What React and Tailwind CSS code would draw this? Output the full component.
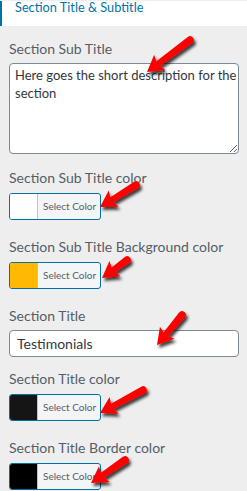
import React from "react";

const ARROWS = [
  { tail: [190, 40], tip: [147, 72] },
  { tail: [136, 185], tip: [100, 207] },
  { tail: [127, 260], tip: [102, 278] },
  { tail: [182, 315], tip: [157, 345] },
  { tail: [143, 390], tip: [100, 413] },
  { tail: [125, 460], tip: [91, 483] },
];

function arrowPath(L) {
  const H = 14, hw = 9.5, r = 3.8, sw = 3.0;
  const b = L - H;
  return `M0,${-r} L${b},${-sw} L${b - 2},${-hw} L${L},0 L${b - 2},${hw} L${b},${sw} L0,${r} A${r},${r} 0 0 1 0,${-r} Z`;
}

function Arrows() {
  return (
    <svg
      className="absolute left-0 top-0 pointer-events-none"
      width="247"
      height="491"
      viewBox="0 0 247 491"
    >
      <defs>
        <filter id="ash" x="-50%" y="-50%" width="200%" height="200%">
          <feDropShadow dx="2" dy="3" stdDeviation="1.4" floodColor="#000" floodOpacity="0.75" />
        </filter>
      </defs>
      {ARROWS.map((a, i) => {
        const dx = a.tip[0] - a.tail[0];
        const dy = a.tip[1] - a.tail[1];
        const L = Math.sqrt(dx * dx + dy * dy);
        const ang = (Math.atan2(dy, dx) * 180) / Math.PI;
        return (
          <g key={i} filter="url(#ash)">
            <path
              d={arrowPath(L)}
              fill="#ff0000"
              transform={`translate(${a.tail[0]} ${a.tail[1]}) rotate(${ang})`}
            />
          </g>
        );
      })}
    </svg>
  );
}

function Label({ children, className = "" }) {
  return (
    <div className={`h-5 leading-5 text-[14px] text-[#555d66] whitespace-nowrap ${className}`}>
      {children}
    </div>
  );
}

function ColorButton({ color }) {
  return (
    <div className="mt-[5px] flex h-[27px] w-[92px] overflow-hidden rounded-[3px] border border-[#0071a1] bg-[#f3f5f6]">
      <div className="w-[27px] shrink-0" style={{ backgroundColor: color }} />
      <div className="flex flex-1 items-center border-l border-[#c3c4c7] pl-[5px] text-[10px] text-[#555d66] whitespace-nowrap">
        Select Color
      </div>
    </div>
  );
}

export default function App() {
  return (
    <div className="relative h-[491px] w-[247px] overflow-hidden bg-[#eeeeee] font-[Lato,sans-serif]">
      <div className="h-[25px] border-l-2 border-[#0073aa] bg-white pl-[13px]">
        <div className="mt-[1px] text-[12.75px] leading-3 text-[#0073aa] whitespace-nowrap">
          Section Title &amp; Subtitle
        </div>
      </div>
      <div className="px-[9px] pt-[13px]">
        <Label>Section Sub Title</Label>
        <textarea
          readOnly
          className="mt-[4px] block h-[91px] w-[230px] rounded-[4px] border border-[#7e8993] bg-white pb-0 pl-[5px] pr-[1px] pt-[2px] text-[13px] leading-[18px] text-[#32373c] outline-none font-[Lato,sans-serif]"
          defaultValue="Here goes the short description for the section"
        />

        <Label className="mt-[14px]">Section Sub Title color</Label>
        <ColorButton color="#ffffff" />

        <Label className="mt-[17px]">Section Sub Title Background color</Label>
        <ColorButton color="#ffb900" />

        <Label className="mt-[17px]">Section Title</Label>
        <div className="mt-[4px] flex h-[27px] w-[230px] items-center rounded-[4px] border border-[#7e8993] bg-white pl-[7px] text-[14px] text-[#32373c]">
          Testimonials
        </div>

        <Label className="mt-[12px]">Section Title color</Label>
        <ColorButton color="#151515" />

        <Label className="mt-[17px]">Section Title Border color</Label>
        <ColorButton color="#000000" />
      </div>
      <Arrows />
    </div>
  );
}
